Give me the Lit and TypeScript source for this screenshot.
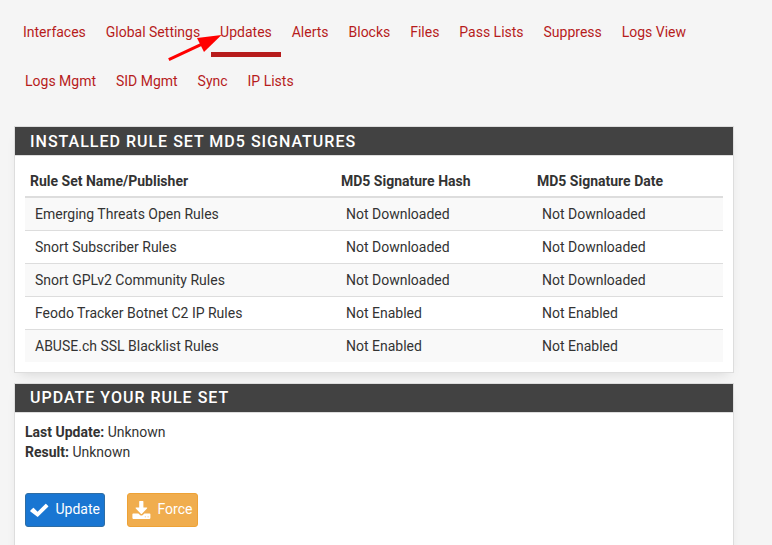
import { LitElement, html, css } from "lit";
import { customElement } from "lit/decorators.js";
import { classMap } from "lit/directives/class-map.js";

const TAB_ROWS = [
  ["Interfaces", "Global Settings", "Updates", "Alerts", "Blocks", "Files", "Pass Lists", "Suppress", "Logs View"],
  ["Logs Mgmt", "SID Mgmt", "Sync", "IP Lists"],
];

const RULE_SETS = [
  ["Emerging Threats Open Rules", "Not Downloaded", "Not Downloaded"],
  ["Snort Subscriber Rules", "Not Downloaded", "Not Downloaded"],
  ["Snort GPLv2 Community Rules", "Not Downloaded", "Not Downloaded"],
  ["Feodo Tracker Botnet C2 IP Rules", "Not Enabled", "Not Enabled"],
  ["ABUSE.ch SSL Blacklist Rules", "Not Enabled", "Not Enabled"],
];

@customElement("app-tabs")
export class AppTabs extends LitElement {
  static styles = css`
    :host { display: flex; flex-direction: column; gap: 4px; position: relative; }
    .row { display: flex; gap: 1.93px; padding-left: 14px; }
    .row.second { padding-left: 16px; }
    .tab {
      padding: 10px 9px;
      border-bottom: 5px solid transparent;
      color: #b71c1c;
      white-space: nowrap;
      text-decoration: none;
    }
    .active { border-bottom-color: #b71c1c; }
    .pointer { position: absolute; left: 160px; top: 18px; width: 70px; height: 36px; }
  `;
  render() {
    return html`
      ${TAB_ROWS.map((row, i) => html`
        <div class=${classMap({ row: true, second: i === 1 })}>
          ${row.map((t) => html`<a class=${classMap({ tab: true, active: t === "Updates" })}>${t}</a>`)}
        </div>`)}
      <svg class="pointer" viewBox="160 30 70 36">
        <path d="M168.8 59.6L203 43.6" stroke="#f00" stroke-width="3" />
        <path d="M221.5 35L197 38L204 52Z" fill="#f00" />
      </svg>`;
  }
}

@customElement("app-panel")
export class AppPanel extends LitElement {
  static properties = { heading: {} };
  declare heading: string;
  static styles = css`
    :host {
      display: block;
      box-sizing: border-box;
      width: 720px;
      margin: 0 0 10px 14px;
      border: 1px solid #ddd;
      background: #fff;
      box-shadow: 0 6px 12px -6px rgba(0, 0, 0, 0.15);
    }
    .heading {
      box-sizing: border-box;
      height: 29px;
      margin: 0;
      padding: var(--heading-inset, 0) 15px 0;
      border-bottom: 1px solid #ddd;
      background: #424242;
      color: #fff;
      font-size: 16px;
      font-weight: 500;
      line-height: 28px;
      letter-spacing: 1px;
      text-transform: uppercase;
    }
    .body { padding: 10px; }
  `;
  render() {
    return html`<h2 class="heading">${this.heading}</h2><div class="body"><slot></slot></div>`;
  }
}

@customElement("app-root")
export class AppRoot extends LitElement {
  static styles = css`
    :host {
      display: block;
      box-sizing: border-box;
      height: 545px;
      padding-top: 12px;
      overflow: hidden;
      background: #f5f5f5;
      color: #333;
      font: 14px/20px Roboto, sans-serif;
    }
    app-tabs { margin-bottom: 20px; }
    .signatures { --heading-inset: 1px; }
    .rules { width: 698px; border-collapse: separate; border-spacing: 0; table-layout: fixed; }
    .name { width: 311px; }
    .hash { width: 196px; }
    th, td { box-sizing: border-box; text-align: left; }
    th { height: 32px; padding: 5px; border-bottom: 2px solid #ddd; font-weight: 700; }
    td { padding: 6px 10px; }
    tr + tr td { border-top: 1px solid #ddd; }
    tbody tr:nth-child(odd) { background: #f9f9f9; }
    .status { margin: -1px 0 0; height: 71px; }
    .actions { display: flex; gap: 22px; padding-bottom: 20px; }
    .btn {
      display: flex;
      align-items: center;
      box-sizing: border-box;
      height: 34px;
      padding: 0 4px;
      border: 1px solid;
      border-radius: 3px;
      color: #fff;
      font: inherit;
    }
    .update { width: 80px; background: #1976d2; border-color: #2e6da4; }
    .force { width: 71px; background: #f0ad4e; border-color: #eea236; }
    .icon { width: 20px; height: 20px; margin-right: 5.5px; fill: #fff; flex: none; }
    .label { margin-top: -2px; }
  `;
  render() {
    return html`
      <app-tabs></app-tabs>
      <app-panel class="signatures" heading="Installed Rule Set MD5 Signatures">
        <table class="rules">
          <thead>
            <tr>
              <th class="name">Rule Set Name/Publisher</th>
              <th class="hash">MD5 Signature Hash</th>
              <th>MD5 Signature Date</th>
            </tr>
          </thead>
          <tbody>
            ${RULE_SETS.map((r) => html`<tr>${r.map((c) => html`<td>${c}</td>`)}</tr>`)}
          </tbody>
        </table>
      </app-panel>
      <app-panel heading="Update Your Rule Set">
        <p class="status"><b>Last Update:</b> Unknown<br /><b>Result:</b> Unknown</p>
        <div class="actions">
          <button class="btn update">
            <svg class="icon" viewBox="0 0 20 20"><path d="M.4 10.6L3 8Q3.4 7.6 3.8 8L7.6 11.7L15.4 3.9Q15.8 3.5 16.2 3.9L18.2 5.9Q18.6 6.3 18.2 6.7L8.2 16.6Q7.6 17.2 7 16.6L.4 11.4Q0 11 .4 10.6Z" /></svg>
            <span class="label">Update</span>
          </button>
          <button class="btn force">
            <svg class="icon" viewBox="0 0 20 20"><path fill-rule="evenodd" d="M7.2 1.5Q7.2 1 7.7 1H10.9Q11.4 1 11.4 1.5V7.5H14.7Q15.7 7.6 15 8.4L10 13.8Q9.4 14.3 8.8 13.8L3.8 8.4Q3.1 7.6 4.1 7.5H7.2ZM1.2 13.4H6.4L8 14.9Q9.4 15.9 10.8 14.9L12.4 13.4H17.6Q18.4 13.4 18.4 14.2V18.1Q18.4 18.9 17.6 18.9H1.2Q.4 18.9 .4 18.1V14.2Q.4 13.4 1.2 13.4ZM12.8 16.5V17.3H13.8V16.5ZM15.6 16.5V17.3H16.6V16.5Z" /></svg>
            <span class="label">Force</span>
          </button>
        </div>
      </app-panel>`;
  }
}
